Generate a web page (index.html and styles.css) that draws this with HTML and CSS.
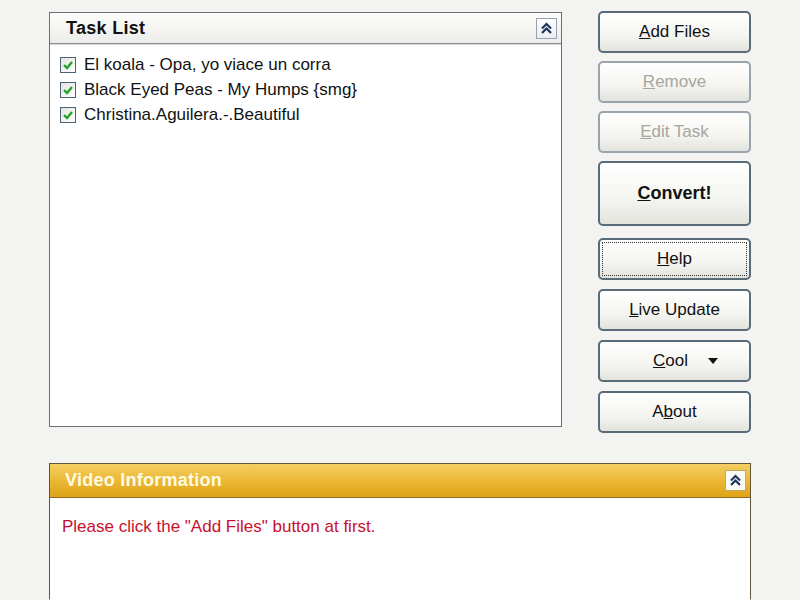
FILE: index.html
```html
<!DOCTYPE html>
<html>
<head>
<meta charset="utf-8">
<link rel="stylesheet" href="styles.css">
</head>
<body>
<div class="app">
  <div class="top">
    <section class="panel task">
      <div class="task-head">
        <span class="task-title">Task List</span>
        <span class="collapse">
          <svg width="13" height="13" viewBox="0 0 13 13"><path d="M2 6.5 L6.5 2 L11 6.5 M2 11 L6.5 6.5 L11 11" fill="none" stroke="#1f3560" stroke-width="2.2"/></svg>
        </span>
      </div>
      <ul class="tasks">
        <li><span class="cb"><svg width="12" height="12" viewBox="0 0 12 12"><path d="M2 6 L5 9 L10 3" fill="none" stroke="#22a32a" stroke-width="2.4"/></svg></span>El koala - Opa, yo viace un corra</li>
        <li><span class="cb"><svg width="12" height="12" viewBox="0 0 12 12"><path d="M2 6 L5 9 L10 3" fill="none" stroke="#22a32a" stroke-width="2.4"/></svg></span>Black Eyed Peas - My Humps {smg}</li>
        <li><span class="cb"><svg width="12" height="12" viewBox="0 0 12 12"><path d="M2 6 L5 9 L10 3" fill="none" stroke="#22a32a" stroke-width="2.4"/></svg></span>Christina.Aguilera.-.Beautiful</li>
      </ul>
    </section>
    <div class="buttons">
      <button class="btn tight"><u>A</u>dd Files</button>
      <button class="btn tight disabled"><u>R</u>emove</button>
      <button class="btn tight disabled"><u>E</u>dit Task</button>
      <button class="btn big"><u>C</u>onvert!</button>
      <button class="btn focus"><u>H</u>elp</button>
      <button class="btn"><u>L</u>ive Update</button>
      <button class="btn"><span class="cool"><u>C</u>ool</span><span class="arrow"></span></button>
      <button class="btn">A<u>b</u>out</button>
    </div>
  </div>
  <section class="panel video">
    <div class="video-head">
      <span class="video-title">Video Information</span>
      <span class="collapse light">
        <svg width="13" height="13" viewBox="0 0 13 13"><path d="M2 6.5 L6.5 2 L11 6.5 M2 11 L6.5 6.5 L11 11" fill="none" stroke="#1f3560" stroke-width="2.2"/></svg>
      </span>
    </div>
    <p class="msg">Please click the "Add Files" button at first.</p>
  </section>
</div>
</body>
</html>
```

FILE: styles.css
```css
html, body {
  margin: 0;
  padding: 0;
  background: #f3f3f2;
  font-family: "Liberation Sans", Arial, sans-serif;
  overflow: hidden;
}
.app {
  padding: 12px 0 0 49px;
}
.top {
  display: flex;
  align-items: flex-start;
}
.panel {
  box-sizing: border-box;
  background: #fff;
}
.task {
  width: 513px;
  height: 415px;
  border: 1px solid #6e6e6e;
  display: flex;
  flex-direction: column;
}
.task-head {
  height: 30px;
  display: flex;
  align-items: center;
  justify-content: space-between;
  padding: 0 4px 0 16px;
  background: linear-gradient(#fdfdfc, #ececea);
  border-bottom: 1px solid #8c8c8c;
  box-shadow: 0 1px 0 #d8d8d8;
}
.task-title {
  font-weight: bold;
  font-size: 18px;
  color: #111;
  letter-spacing: 0.3px;
}
.collapse {
  width: 21px;
  height: 21px;
  box-sizing: border-box;
  border: 1px solid #9aa3ad;
  background: linear-gradient(#ffffff, #e9eef4);
  display: flex;
  align-items: center;
  justify-content: center;
}
.collapse.light {
  border-color: #c6a85a;
  background: #fbfbf6;
}
.tasks {
  list-style: none;
  margin: 0;
  padding: 8px 0 0 10px;
}
.tasks li {
  height: 25px;
  display: flex;
  align-items: center;
  font-size: 17px;
  color: #111;
}
.cb {
  width: 16px;
  height: 16px;
  box-sizing: border-box;
  border: 1px solid #4c6278;
  background: linear-gradient(135deg, #e4e4de, #ffffff);
  display: flex;
  align-items: center;
  justify-content: center;
  margin-right: 8px;
}
.buttons {
  margin-left: 36px;
  width: 153px;
  display: flex;
  flex-direction: column;
  margin-top: -1px;
}
.btn {
  box-sizing: border-box;
  height: 42px;
  margin-bottom: 9px;
  border: 2px solid #596a78;
  border-radius: 5px;
  background: linear-gradient(#ffffff 0%, #f4f4f0 60%, #e3e3de 100%);
  font-family: "Liberation Sans", Arial, sans-serif;
  font-size: 17px;
  color: #111;
  padding: 0;
  display: flex;
  align-items: center;
  justify-content: center;
}
.btn.tight {
  margin-bottom: 8px;
}
.btn:last-child {
  margin-bottom: 0;
}
.btn.disabled {
  color: #a6a69e;
  border-color: #9aa4ad;
}
.btn.big {
  height: 65px;
  font-weight: bold;
  font-size: 18px;
  margin-bottom: 12px;
}
.btn.focus {
  outline: 1px dotted #333;
  outline-offset: -5px;
}
.cool {
  margin-left: 22px;
}
.arrow {
  margin-left: 20px;
  width: 0;
  height: 0;
  border-left: 5px solid transparent;
  border-right: 5px solid transparent;
  border-top: 6px solid #111;
}
.video {
  margin-top: 30px;
  width: 702px;
  height: 137px;
  border: 1px solid #5e5636;
  border-bottom-color: #ffffff;
}
.video-head {
  height: 33px;
  display: flex;
  align-items: center;
  justify-content: space-between;
  padding: 0 4px 0 15px;
  background: linear-gradient(#f4cf63, #e9b632 55%, #dea318);
  border-bottom: 1px solid #8a6a1c;
}
.video-title {
  font-weight: bold;
  font-size: 18px;
  color: #fffbe2;
  letter-spacing: 0.25px;
}
.msg {
  margin: 19px 0 0 12px;
  font-size: 17px;
  color: #c8102e;
}
```
